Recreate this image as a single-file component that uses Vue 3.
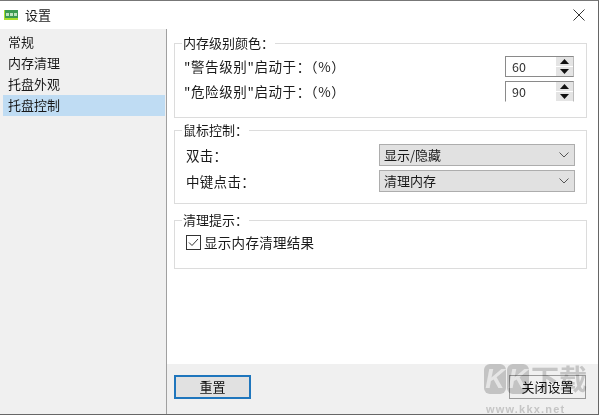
<script setup>
const navItems = ['常规', '内存清理', '托盘外观', '托盘控制']
const levels = [
  { label: '"警告级别"启动于：（%）', value: '60' },
  { label: '"危险级别"启动于：（%）', value: '90' },
]
const mouse = [
  { label: '双击：', value: '显示/隐藏' },
  { label: '中键点击：', value: '清理内存' },
]
</script>

<template>
  <div class="window">
    <header class="titlebar">
      <svg class="logo" width="14" height="10" viewBox="0 0 14 10">
        <rect width="14" height="10" fill="#3c9a52" />
        <rect y="8" width="14" height="2" fill="#a9df2c" />
        <rect width="1" height="10" fill="#a9df2c" />
        <rect x="2" y="3" width="3" height="3" fill="#bfe3c0" />
        <rect x="6" y="3" width="3" height="3" fill="#bfe3c0" />
        <rect x="10" y="3" width="3" height="3" fill="#bfe3c0" />
      </svg>
      <span class="title">设置</span>
      <svg class="close" width="12" height="12" viewBox="0 0 12 12">
        <path d="M.5.5l11 11M11.500.5l-11 11" stroke="#333" fill="none" />
      </svg>
    </header>
    <div class="body">
      <nav class="sidebar">
        <div v-for="(n, i) in navItems" :key="n" class="nav" :class="{ active: i === 3 }">{{ n }}</div>
      </nav>
      <main class="main">
        <div class="content">
          <fieldset class="group g1">
            <legend>内存级别颜色：</legend>
            <div v-for="(l, i) in levels" :key="l.value" class="row level">
              <span class="wide level-text">{{ l.label }}</span>
              <div class="spin" :class="{ cut: i === 1 }">
                <span class="spin-val">{{ l.value }}</span>
                <div class="spin-btns">
                  <div class="arrow"><svg width="9" height="5" viewBox="0 0 9 5"><path d="M4.500 0L9 5H0z" fill="#111" /></svg></div>
                  <div class="arrow"><svg width="9" height="5" viewBox="0 0 9 5"><path d="M4.500 5L9 0H0z" fill="#111" /></svg></div>
                </div>
              </div>
            </div>
          </fieldset>
          <fieldset class="group g2">
            <legend>鼠标控制：</legend>
            <div v-for="m in mouse" :key="m.label" class="row pick">
              <span class="wide">{{ m.label }}</span>
              <div class="combo">
                <span>{{ m.value }}</span>
                <svg width="10" height="6" viewBox="0 0 10 6"><path d="M.5.500L5 5 9.500.5" stroke="#555" fill="none" /></svg>
              </div>
            </div>
          </fieldset>
          <fieldset class="group g3">
            <legend>清理提示：</legend>
            <div class="check-row">
              <span class="check">
                <svg width="11" height="9" viewBox="0 0 11 9"><path d="M1 4.500L4 7.500 10 1" stroke="#333" fill="none" /></svg>
              </span>
              <span class="wide">显示内存清理结果</span>
            </div>
          </fieldset>
        </div>
        <footer class="footer">
          <button class="btn primary">重置</button>
          <button class="btn ghost">关闭设置</button>
        </footer>
      </main>
    </div>
    <div class="watermark">
      <div class="wm-logo">
        <span class="wm-k">K</span><span class="wm-k">K</span><span class="wm-cn">下载</span>
      </div>
      <span class="wm-url">www.kkx.net</span>
    </div>
  </div>
</template>

<style>
html, body { margin: 0; background: #fff; }
</style>

<style scoped>
.window {
  position: relative;
  width: 600px;
  height: 416px;
  box-sizing: border-box;
  overflow: hidden;
  display: flex;
  flex-direction: column;
  background: #fff;
  padding: 1px 2px 2px 0;
  color: #1a1a1a;
  font: 13px/18px "Noto Sans CJK SC", "Liberation Sans", sans-serif;
}
.window::before {
  content: "";
  position: absolute;
  inset: 0 1px 1px 0;
  border-top: 1px solid #777;
  border-right: 1px solid #666;
  border-bottom: 1px solid #666;
  pointer-events: none;
}
.titlebar {
  height: 28px;
  flex: none;
  display: flex;
  align-items: center;
  padding: 0 13px 0 4px;
}
.logo { margin-right: 7px; }
.title { flex: 1; }
.body { flex: 1; display: flex; min-height: 0; }
.sidebar {
  width: 167px;
  flex: none;
  box-sizing: border-box;
  padding: 3px 1px 0 3px;
  background: #f0f0f0;
  border-right: 1px solid #a0a0a0;
}
.nav { height: 21px; line-height: 19px; padding-left: 5px; }
.nav.active { background: #bfdcf3; }
.main { flex: 1; display: flex; flex-direction: column; min-width: 0; }
.content {
  flex: 1;
  display: flex;
  flex-direction: column;
  padding: 6px 11px 0 7px;
}
.group {
  margin: 0;
  padding: 0 0 0 11px;
  border: 1px solid #dcdcdc;
  box-sizing: border-box;
  min-width: 0;
}
.group legend { padding: 0 1px; margin-left: -4px; line-height: 16px; }
.wide { font-size: 13.5px; letter-spacing: .3px; }
.level-text { letter-spacing: .6px; }
.g1 { height: 83px; padding-top: 2px; }
.g2 { height: 82px; margin-top: 4px; }
.g3 { height: 57px; margin-top: 8px; }
.row { display: flex; align-items: center; }
.level { height: 24px; padding-right: 12px; justify-content: space-between; margin: 1px 0 0 -2px; }
.spin {
  width: 69px;
  height: 21px;
  box-sizing: border-box;
  display: flex;
  border: 1px solid #8a8a8a;
  border-right-color: #bbb;
  background: #fff;
}
.spin.cut { border-bottom-color: transparent; }
.spin-val { flex: 1; padding-left: 6px; font-size: 12.5px; line-height: 19px; color: #333; }
.spin-btns { width: 17px; display: flex; flex-direction: column; gap: 1px; }
.arrow {
  flex: 1;
  display: flex;
  align-items: center;
  justify-content: center;
  background: #e4e4e4;
}
.pick { height: 25px; margin-top: 1px; padding-right: 11px; justify-content: space-between; }
.g2 .pick:first-of-type { margin-top: 4px; }
.combo {
  width: 196px;
  height: 22px;
  box-sizing: border-box;
  display: flex;
  align-items: center;
  justify-content: space-between;
  padding: 0 5px 0 4px;
  background: #e1e1e1;
  border: 1px solid #adadad;
}
.check-row { display: flex; align-items: center; gap: 3px; margin-top: 5px; }
.check {
  width: 15px;
  height: 15px;
  box-sizing: border-box;
  display: flex;
  align-items: center;
  justify-content: center;
  border: 1px solid #333;
  background: #fff;
}
.footer {
  height: 50px;
  flex: none;
  box-sizing: border-box;
  display: flex;
  align-items: flex-start;
  justify-content: space-between;
  padding: 11px 12px 0 7px;
  background: #f0f0f0;
}
.btn {
  width: 77px;
  height: 24px;
  box-sizing: border-box;
  padding: 0;
  font: inherit;
  color: #111;
  background: #e1e1e1;
  border: 1px solid #adadad;
}
.primary { border: 2px solid #1f76bd; }
.ghost { background: transparent; border-color: #999; }
.watermark {
  position: absolute;
  left: 484px;
  top: 362px;
  width: 114px;
  height: 53px;
  display: flex;
  flex-direction: column;
  align-items: flex-start;
  justify-content: space-between;
  pointer-events: none;
  color: #d2d2d2;
  mix-blend-mode: multiply;
}
.wm-logo { display: flex; align-items: center; height: 33px; }
.wm-k {
  width: 22px;
  height: 30px;
  margin-right: 1px;
  border-radius: 6px;
  background: #cfcfcf;
  color: #f4f4f4;
  text-align: center;
  font: italic 700 27px/30px "Liberation Sans", sans-serif;
}
.wm-cn {
  margin-left: 1px;
  font: 700 28px/33px "Noto Sans CJK SC", sans-serif;
  white-space: nowrap;
}
.wm-url {
  margin-left: 2px;
  font: 700 11px/12px "Liberation Sans", sans-serif;
  letter-spacing: 1.2px;
}
</style>
